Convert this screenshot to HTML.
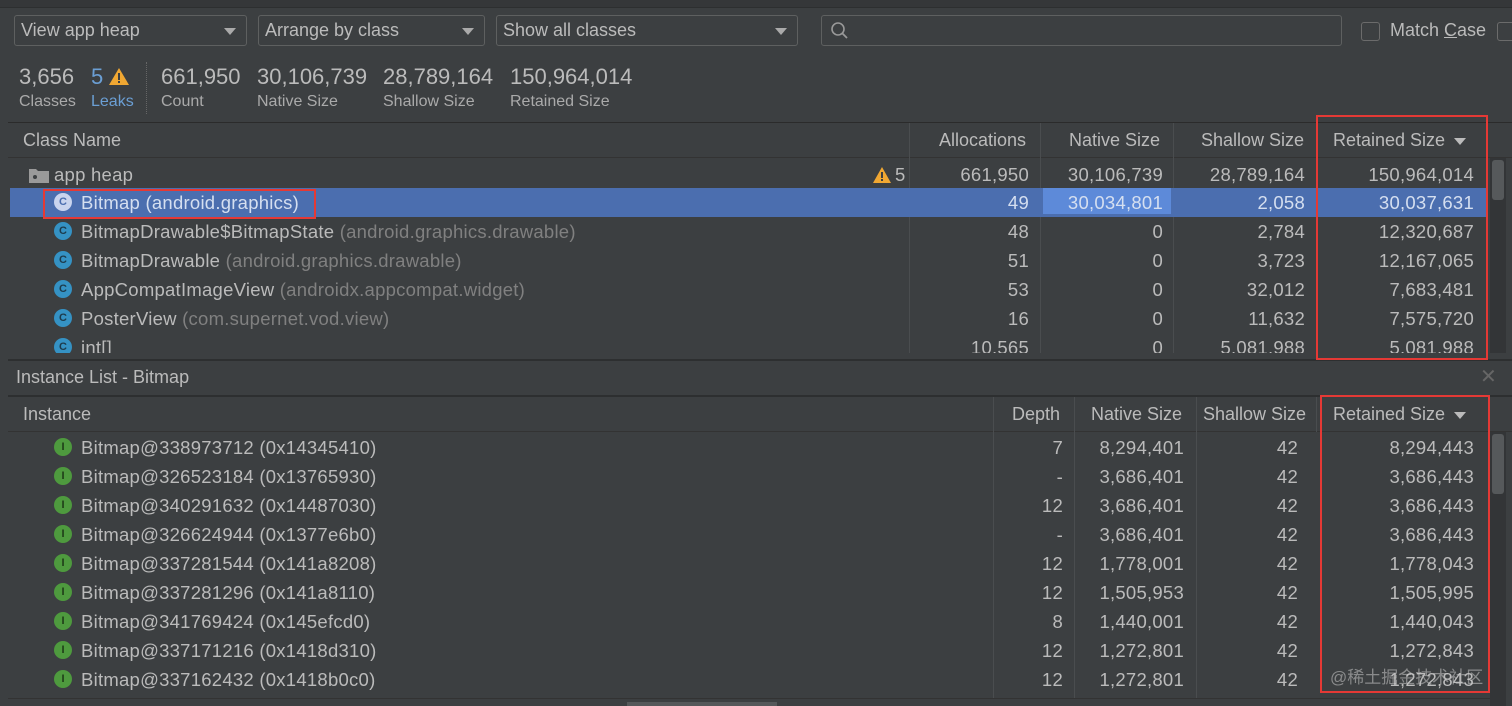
<!DOCTYPE html>
<html><head><meta charset="utf-8"><style>
*{margin:0;padding:0;box-sizing:border-box}
body{width:1512px;height:706px;overflow:hidden;background:#3c3f41;font-family:"Liberation Sans","Noto Sans CJK SC",sans-serif;color:#bbbbbb;position:relative}
.a{position:absolute;white-space:nowrap}
.dd{position:absolute;top:15px;height:31px;border:1px solid #5e6060;border-radius:3px;background:#3c3f41;font-size:18px;line-height:29px;padding-left:6px;color:#bbb}
.dd:after{content:"";position:absolute;right:10px;top:12px;border-left:6px solid transparent;border-right:6px solid transparent;border-top:7px solid #aaa}
.num{font-size:22px;color:#bbb}
.lab{font-size:16px;color:#aaa}
.row{position:absolute;left:10px;width:1478px;height:29px;font-size:18.5px;letter-spacing:0.25px;line-height:29px}
.r{position:absolute;text-align:right}
.ic{position:absolute;width:18px;height:18px;border-radius:50%;font-size:11px;line-height:18px;text-align:center;font-weight:bold;letter-spacing:0}
.c{background:#3592c4;color:#1d3b4c}
.i{background:#4e9a3e;color:#1e3a17}
.g{color:#808080}
.vl{position:absolute;width:1px;background:#4a4d4f}
.red{position:absolute;border:2px solid #e53935}
</style></head><body>
<div class="a" style="left:0;top:0;width:1512px;height:8px;background:#353739;border-bottom:1px solid #2d2f30"></div>
<div class="dd" style="left:14px;width:233px">View app heap</div>
<div class="dd" style="left:258px;width:227px">Arrange by class</div>
<div class="dd" style="left:496px;width:302px">Show all classes</div>
<div class="a" style="left:821px;top:15px;width:521px;height:31px;border:1px solid #5e6060;border-radius:3px"></div>
<svg class="a" style="left:830px;top:21px" width="20" height="20"><circle cx="8" cy="8" r="6" fill="none" stroke="#999" stroke-width="1.6"/><line x1="12.5" y1="12.5" x2="17" y2="17" stroke="#999" stroke-width="1.8"/></svg>
<div class="a" style="left:1361px;top:22px;width:19px;height:19px;border:1px solid #6b6b6b;border-radius:3px"></div>
<div class="a" style="left:1390px;top:20px;font-size:18px">Match <u>C</u>ase</div>
<div class="a" style="left:1497px;top:22px;width:19px;height:19px;border:1px solid #6b6b6b;border-radius:3px"></div>

<div class="a num" style="left:19px;top:64px">3,656</div><div class="a lab" style="left:19px;top:93px">Classes</div>
<div class="a num" style="left:91px;top:64px;color:#6b9fd4">5</div>
<svg class="a" style="left:108px;top:67px" width="22" height="19"><polygon points="11,1 21,18 1,18" fill="#f0a732"/><rect x="10" y="6" width="2" height="7" fill="#3c3f41"/><rect x="10" y="14" width="2" height="2" fill="#3c3f41"/></svg>
<div class="a lab" style="left:91px;top:93px;color:#6b9fd4">Leaks</div>
<div class="a" style="left:146px;top:62px;height:52px;border-left:1px dotted #666"></div>
<div class="a num" style="left:161px;top:64px">661,950</div><div class="a lab" style="left:161px;top:93px">Count</div>
<div class="a num" style="left:257px;top:64px">30,106,739</div><div class="a lab" style="left:257px;top:93px">Native Size</div>
<div class="a num" style="left:383px;top:64px">28,789,164</div><div class="a lab" style="left:383px;top:93px">Shallow Size</div>
<div class="a num" style="left:510px;top:64px">150,964,014</div><div class="a lab" style="left:510px;top:93px">Retained Size</div>

<div class="a" style="left:8px;top:122px;width:1504px;height:1px;background:#2b2b2b"></div>
<div class="a" style="left:8px;top:123px;width:1504px;height:35px;background:#3c3f41;border-bottom:1px solid #333"></div>
<div class="a" style="left:23px;top:130px;font-size:18px">Class Name</div>
<div class="r" style="left:910px;width:116px;top:130px;font-size:18px">Allocations</div>
<div class="r" style="left:1040px;width:120px;top:130px;font-size:18px">Native Size</div>
<div class="r" style="left:1173px;width:131px;top:130px;font-size:18px">Shallow Size</div>
<div class="a" style="left:1333px;top:130px;font-size:18px">Retained Size</div>
<div class="a" style="left:1454px;top:138px;border-left:6px solid transparent;border-right:6px solid transparent;border-top:7px solid #bbb"></div>
<div class="vl" style="left:909px;top:123px;height:230px"></div>
<div class="vl" style="left:1040px;top:123px;height:230px"></div>
<div class="vl" style="left:1173px;top:123px;height:230px"></div>
<div class="vl" style="left:1316px;top:123px;height:35px"></div>
<div class="a" style="left:1490px;top:158px;width:16px;height:195px;background:#333537"></div>
<div class="a" style="left:1492px;top:160px;width:12px;height:40px;background:#56595b;border-radius:3px"></div>

<div class="row" style="top:160px">
<svg class="a" style="left:19px;top:7px" width="20" height="16"><path d="M0 2h7l2 2h11v12H0z" fill="#9a9a9a"/><circle cx="6" cy="10" r="2" fill="#3c3f41"/></svg>
<span class="a" style="left:44px">app heap</span>
<svg class="a" style="left:862px;top:6px" width="20" height="18"><polygon points="10,1 19,17 1,17" fill="#f0a732"/><rect x="9" y="6" width="2" height="6" fill="#3c3f41"/><rect x="9" y="13" width="2" height="2" fill="#3c3f41"/></svg>
<span class="a" style="left:885px">5</span>
<span class="r" style="left:900px;width:119px">661,950</span><span class="r" style="left:1030px;width:123px">30,106,739</span><span class="r" style="left:1163px;width:132px">28,789,164</span><span class="r" style="left:1306px;width:158px">150,964,014</span></div>

<div class="row" style="top:188px;background:#4b6eaf;color:#d5dff0">
<div class="ic" style="left:44px;top:5px;background:#c9d4ee;color:#4b6eaf">C</div>
<span class="a" style="left:71px">Bitmap (android.graphics)</span>
<span class="r" style="left:900px;width:119px">49</span>
<div class="a" style="left:1033px;top:0;width:128px;height:26px;background:#5d8ad9"></div>
<span class="r" style="left:1030px;width:123px">30,034,801</span><span class="r" style="left:1163px;width:132px">2,058</span><span class="r" style="left:1306px;width:158px">30,037,631</span></div>

<div class="row" style="top:217px"><div class="ic c" style="left:44px;top:5px">C</div><span class="a" style="left:71px">BitmapDrawable$BitmapState <span class="g">(android.graphics.drawable)</span></span><span class="r" style="left:900px;width:119px">48</span><span class="r" style="left:1030px;width:123px">0</span><span class="r" style="left:1163px;width:132px">2,784</span><span class="r" style="left:1306px;width:158px">12,320,687</span></div>
<div class="row" style="top:246px"><div class="ic c" style="left:44px;top:5px">C</div><span class="a" style="left:71px">BitmapDrawable <span class="g">(android.graphics.drawable)</span></span><span class="r" style="left:900px;width:119px">51</span><span class="r" style="left:1030px;width:123px">0</span><span class="r" style="left:1163px;width:132px">3,723</span><span class="r" style="left:1306px;width:158px">12,167,065</span></div>
<div class="row" style="top:275px"><div class="ic c" style="left:44px;top:5px">C</div><span class="a" style="left:71px">AppCompatImageView <span class="g">(androidx.appcompat.widget)</span></span><span class="r" style="left:900px;width:119px">53</span><span class="r" style="left:1030px;width:123px">0</span><span class="r" style="left:1163px;width:132px">32,012</span><span class="r" style="left:1306px;width:158px">7,683,481</span></div>
<div class="row" style="top:304px"><div class="ic c" style="left:44px;top:5px">C</div><span class="a" style="left:71px">PosterView <span class="g">(com.supernet.vod.view)</span></span><span class="r" style="left:900px;width:119px">16</span><span class="r" style="left:1030px;width:123px">0</span><span class="r" style="left:1163px;width:132px">11,632</span><span class="r" style="left:1306px;width:158px">7,575,720</span></div>
<div class="a" style="left:10px;top:333px;width:1478px;height:20px;overflow:hidden"><div class="row" style="top:0;left:0"><div class="ic c" style="left:44px;top:5px">C</div><span class="a" style="left:71px">int[]</span><span class="r" style="left:900px;width:119px">10,565</span><span class="r" style="left:1030px;width:123px">0</span><span class="r" style="left:1163px;width:132px">5,081,988</span><span class="r" style="left:1306px;width:158px">5,081,988</span></div></div>

<div class="a" style="left:8px;top:359px;width:1504px;height:2px;background:#2d2f30"></div>
<div class="a" style="left:16px;top:367px;font-size:18px">Instance List - Bitmap</div>
<div class="a" style="left:1480px;top:364px;font-size:20px;color:#666">✕</div>
<div class="a" style="left:8px;top:395px;width:1504px;height:2px;background:#2d2f30"></div>
<div class="a" style="left:8px;top:397px;width:1504px;height:35px;border-bottom:1px solid #333"></div>
<div class="a" style="left:23px;top:404px;font-size:18px">Instance</div>
<div class="r" style="left:995px;width:65px;top:404px;font-size:18px">Depth</div>
<div class="r" style="left:1074px;width:108px;top:404px;font-size:18px">Native Size</div>
<div class="r" style="left:1196px;width:110px;top:404px;font-size:18px">Shallow Size</div>
<div class="a" style="left:1333px;top:404px;font-size:18px">Retained Size</div>
<div class="a" style="left:1454px;top:412px;border-left:6px solid transparent;border-right:6px solid transparent;border-top:7px solid #bbb"></div>
<div class="vl" style="left:993px;top:397px;height:309px"></div>
<div class="vl" style="left:1074px;top:397px;height:309px"></div>
<div class="vl" style="left:1196px;top:397px;height:309px"></div>
<div class="vl" style="left:1316px;top:397px;height:35px"></div>
<div class="a" style="left:1490px;top:432px;width:16px;height:274px;background:#333537"></div>
<div class="a" style="left:1492px;top:434px;width:12px;height:60px;background:#56595b;border-radius:3px"></div>

<div id="ins"></div>
<script>
var d=[["338973712","0x14345410","7","8,294,401","8,294,443"],["326523184","0x13765930","-","3,686,401","3,686,443"],["340291632","0x14487030","12","3,686,401","3,686,443"],["326624944","0x1377e6b0","-","3,686,401","3,686,443"],["337281544","0x141a8208","12","1,778,001","1,778,043"],["337281296","0x141a8110","12","1,505,953","1,505,995"],["341769424","0x145efcd0","8","1,440,001","1,440,043"],["337171216","0x1418d310","12","1,272,801","1,272,843"],["337162432","0x1418b0c0","12","1,272,801","1,272,843"]];
var h="";d.forEach(function(r,k){h+='<div class="row" style="top:'+(433+k*29)+'px"><div class="ic i" style="left:44px;top:5px">I</div><span class="a" style="left:71px">Bitmap@'+r[0]+' ('+r[1]+')</span><span class="r" style="left:985px;width:68px">'+r[2]+'</span><span class="r" style="left:1064px;width:110px">'+r[3]+'</span><span class="r" style="left:1186px;width:102px">42</span><span class="r" style="left:1306px;width:158px">'+r[4]+'</span></div>';});
document.getElementById("ins").innerHTML=h;
</script>
<div class="a" style="left:8px;top:698px;width:1482px;height:8px;background:#3c3f41;border-top:1px solid #333"></div>
<div class="a" style="left:627px;top:702px;width:150px;height:4px;background:#55585a"></div>
<div class="a" style="left:1330px;top:663px;font-size:17px;color:rgba(200,200,200,0.55)">@稀土掘金技术社区</div>

<div class="red" style="left:43px;top:189px;width:273px;height:30px"></div>
<div class="red" style="left:1316px;top:115px;width:172px;height:245px"></div>
<div class="red" style="left:1320px;top:395px;width:170px;height:298px"></div>
</body></html>
